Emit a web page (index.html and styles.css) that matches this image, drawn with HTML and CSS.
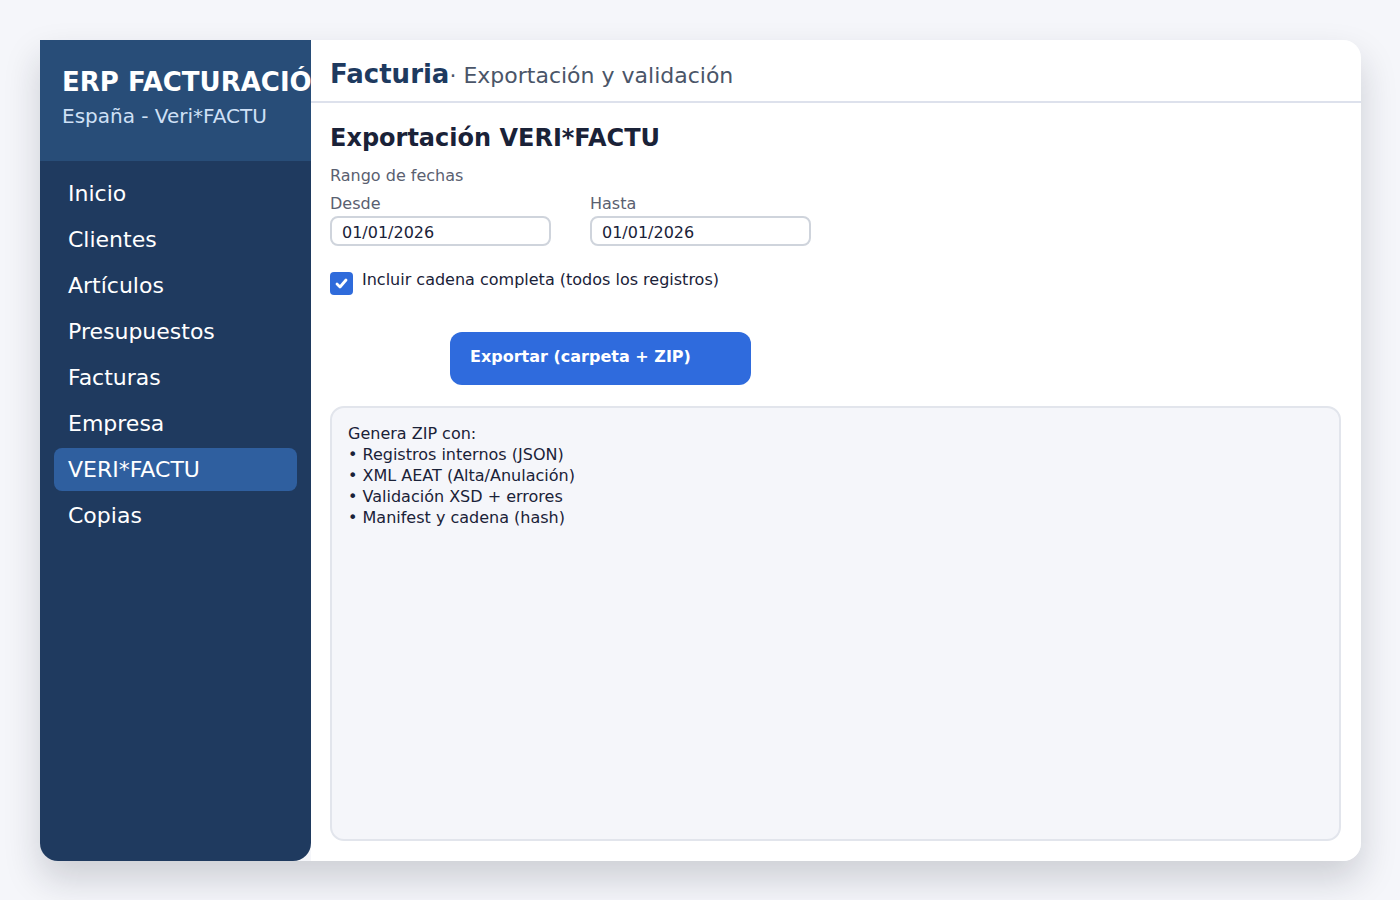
FILE: index.html
```html
<!DOCTYPE html>
<html lang="es">
<head>
    <meta charset="UTF-8">
    <meta name="viewport" content="width=device-width, initial-scale=1.0">
    <title>ERP Facturación - VERI*FACTU</title>
    <link rel="stylesheet" href="styles.css">
</head>
<body>
    <div class="window">
        <aside class="sidebar">
            <div class="brand">
                <div class="brand-title">ERP FACTURACIÓN</div>
                <div class="brand-sub">España - Veri*FACTU</div>
            </div>
            <nav class="nav">
                <div class="nav-item">Inicio</div>
                <div class="nav-item">Clientes</div>
                <div class="nav-item">Artículos</div>
                <div class="nav-item">Presupuestos</div>
                <div class="nav-item">Facturas</div>
                <div class="nav-item">Empresa</div>
                <div class="nav-item active">VERI*FACTU</div>
                <div class="nav-item">Copias</div>
            </nav>
        </aside>

        <main class="main">
            <header class="topbar">
                <span class="app-name">Facturia</span><span class="app-sub">· Exportación y validación</span>
            </header>

            <section class="content">
                <h2 class="section-title">Exportación VERI*FACTU</h2>
                <div class="muted">Rango de fechas</div>
                <div class="dates">
                    <div class="field">
                        <label class="muted">Desde</label>
                        <div class="input">01/01/2026</div>
                    </div>
                    <div class="field">
                        <label class="muted">Hasta</label>
                        <div class="input">01/01/2026</div>
                    </div>
                </div>

                <div class="check-row">
                    <span class="checkbox">
                        <svg width="15" height="15" viewBox="0 0 15 15"><path d="M3 8 L6 11 L12 4" fill="none" stroke="#fff" stroke-width="2.8" stroke-linecap="round" stroke-linejoin="round"/></svg>
                    </span>
                    <span>Incluir cadena completa (todos los registros)</span>
                </div>

                <div class="actions">
                    <button class="btn-primary">Exportar (carpeta + ZIP)</button>
                </div>

                <div class="info">Genera ZIP con:
• Registros internos (JSON)
• XML AEAT (Alta/Anulación)
• Validación XSD + errores
• Manifest y cadena (hash)</div>
            </section>
        </main>
    </div>
</body>
</html>
```

FILE: styles.css
```css
body {
    margin: 0;
    padding: 40px 39px 39px 40px;
    background-color: #f5f6fa;
    font-family: "DejaVu Sans", sans-serif;
    color: #1a2238;
}

.window {
    display: flex;
    height: 821px;
    border-radius: 0 18px 18px 18px;
    box-shadow: 0 18px 36px rgba(20, 25, 45, 0.18);
}

.sidebar {
    width: 271px;
    flex-shrink: 0;
    background-color: #1f3a5f;
    border-radius: 0 0 18px 18px;
    display: flex;
    flex-direction: column;
    overflow: hidden;
}

.brand {
    height: 121px;
    box-sizing: border-box;
    padding: 26px 0 0 22px;
    background-color: #284d78;
    white-space: nowrap;
}

.brand-title {
    color: #fff;
    font-size: 26px;
    font-weight: bold;
    line-height: 32px;
}

.brand-sub {
    margin-top: 5px;
    color: #cfe0f6;
    font-size: 20px;
    line-height: 26px;
}

.nav {
    padding: 11px 14px;
    display: flex;
    flex-direction: column;
    gap: 3px;
}

.nav-item {
    height: 43px;
    line-height: 44px;
    padding: 0 14px;
    border-radius: 8px;
    color: #fff;
    font-size: 22px;
}

.nav-item.active {
    background-color: #2f5f9f;
}

.main {
    flex: 1;
    background-color: #fff;
    border-radius: 0 18px 18px 0;
    display: flex;
    flex-direction: column;
}

.topbar {
    height: 63px;
    box-sizing: border-box;
    padding: 19px 19px 0;
    border-bottom: 2px solid #dde1ec;
    white-space: nowrap;
}

.app-name {
    color: #1e3a5f;
    font-size: 26px;
    font-weight: bold;
}

.app-sub {
    color: #4a5568;
    font-size: 22px;
}

.content {
    flex: 1;
    padding: 20px 20px 20px 19px;
    display: flex;
    flex-direction: column;
}

.section-title {
    margin: 0 0 13px;
    font-size: 24px;
    line-height: 30px;
}

.muted {
    color: #5a6070;
    font-size: 16px;
    line-height: 20px;
}

.dates {
    display: flex;
    gap: 39px;
    margin-top: 8px;
}

.field {
    display: flex;
    flex-direction: column;
    gap: 2px;
}

.input {
    width: 221px;
    height: 30px;
    box-sizing: border-box;
    border: 2px solid #cfd4dc;
    border-radius: 8px;
    padding: 0 10px;
    font-size: 16px;
    line-height: 29px;
    color: #1a2238;
}

.check-row {
    display: flex;
    align-items: flex-start;
    gap: 9px;
    margin-top: 24px;
    font-size: 16px;
    line-height: 20px;
}

.checkbox {
    width: 23px;
    height: 23px;
    margin-top: 2px;
    border-radius: 4px;
    background-color: #2f6bdb;
    display: flex;
    align-items: center;
    justify-content: center;
}

.actions {
    margin-top: 37px;
    padding-left: 120px;
}

.btn-primary {
    width: 301px;
    height: 53px;
    border: none;
    border-radius: 12px;
    background-color: #2f6bdd;
    color: #fff;
    font-family: "DejaVu Sans", sans-serif;
    font-size: 16px;
    font-weight: bold;
    text-align: left;
    padding: 0 20px 4px;
    cursor: pointer;
}

.info {
    flex: 1;
    margin-top: 21px;
    background-color: #f5f6fa;
    border: 2px solid #e2e5ec;
    border-radius: 14px;
    padding: 15px 16px 16px;
    font-size: 16px;
    line-height: 21px;
    white-space: pre-line;
}
```
